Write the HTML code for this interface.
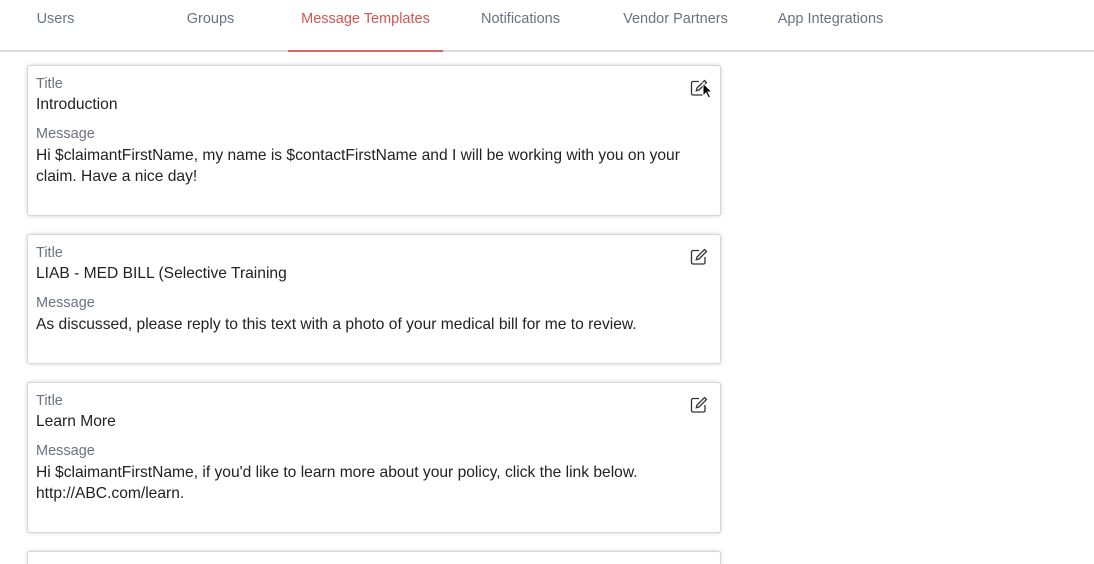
<!DOCTYPE html>
<html style="width:1094px;height:564px;overflow:hidden"><head><style>
*{margin:0;padding:0;box-sizing:border-box}
body{width:1094px;height:564px;overflow:hidden;background:#fff;font-family:"Liberation Sans",sans-serif;position:relative}
.nav{position:absolute;left:0;top:0;width:1094px;height:52px;border-bottom:2px solid #dcdcdc}
.tab{position:absolute;top:0;width:155px;height:52px;text-align:center;line-height:38px;font-size:14.5px;color:#6b7280}
.tab.a{color:#d9534f;border-bottom:2px solid #e06666;height:52px}
.card{position:absolute;left:27px;width:694px;border:1px solid #d6d6d6;border-radius:3px;box-shadow:0 0 4px rgba(0,0,0,0.18);background:#fff}
.l{position:absolute;left:8px;font-size:14.5px;color:#6b7280}
.v{position:absolute;left:8px;font-size:15.6px;color:#222;line-height:21px;white-space:nowrap}
.ic{position:absolute;left:662px}
</style></head><body>
<div class="nav">
<div class="tab" style="left:-22px">Users</div>
<div class="tab" style="left:133px">Groups</div>
<div class="tab a" style="left:288px">Message Templates</div>
<div class="tab" style="left:443px">Notifications</div>
<div class="tab" style="left:598px">Vendor Partners</div>
<div class="tab" style="left:753px">App Integrations</div>
</div>

<div class="card" style="top:65px;height:151px">
<div class="l" style="top:10px">Title</div>
<div class="v" style="top:28px">Introduction</div>
<div class="l" style="top:60px">Message</div>
<div class="v" style="top:79px">Hi $claimantFirstName, my name is $contactFirstName and I will be working with you on your<br>claim. Have a nice day!</div>
<svg class="ic" style="top:13px" width="18" height="18" viewBox="0 0 18 18"><path d="M9 2.5H3a1.5 1.5 0 0 0-1.5 1.5v10.5A1.5 1.5 0 0 0 3 16h10.5a1.5 1.5 0 0 0 1.5-1.5V9" fill="none" stroke="#333" stroke-width="1.3"/><path d="M14.5 1.5l2 2L9 11l-2.7.7L7 9z" fill="none" stroke="#333" stroke-width="1.3"/></svg>
<svg style="position:absolute;left:674px;top:16px" width="12" height="18" viewBox="0 0 12 18"><path d="M1 1v13l3-3 2.5 5 2-1-2.5-5H10z" fill="#000" stroke="#fff" stroke-width="1"/></svg>
</div>

<div class="card" style="top:234px;height:130px">
<div class="l" style="top:10px">Title</div>
<div class="v" style="top:28px">LIAB - MED BILL (Selective Training</div>
<div class="l" style="top:60px">Message</div>
<div class="v" style="top:79px">As discussed, please reply to this text with a photo of your medical bill for me to review.</div>
<svg class="ic" style="top:13px" width="18" height="18" viewBox="0 0 18 18"><path d="M9 2.5H3a1.5 1.5 0 0 0-1.5 1.5v10.5A1.5 1.5 0 0 0 3 16h10.5a1.5 1.5 0 0 0 1.5-1.5V9" fill="none" stroke="#333" stroke-width="1.3"/><path d="M14.5 1.5l2 2L9 11l-2.7.7L7 9z" fill="none" stroke="#333" stroke-width="1.3"/></svg>
</div>

<div class="card" style="top:382px;height:151px">
<div class="l" style="top:10px">Title</div>
<div class="v" style="top:28px">Learn More</div>
<div class="l" style="top:60px">Message</div>
<div class="v" style="top:79px">Hi $claimantFirstName, if you'd like to learn more about your policy, click the link below.<br>http://ABC.com/learn.</div>
<svg class="ic" style="top:13px" width="18" height="18" viewBox="0 0 18 18"><path d="M9 2.5H3a1.5 1.5 0 0 0-1.5 1.5v10.5A1.5 1.5 0 0 0 3 16h10.5a1.5 1.5 0 0 0 1.5-1.5V9" fill="none" stroke="#333" stroke-width="1.3"/><path d="M14.5 1.5l2 2L9 11l-2.7.7L7 9z" fill="none" stroke="#333" stroke-width="1.3"/></svg>
</div>

<div class="card" style="top:551px;height:13px;border-bottom:none;border-radius:3px 3px 0 0"></div>
</body></html>
